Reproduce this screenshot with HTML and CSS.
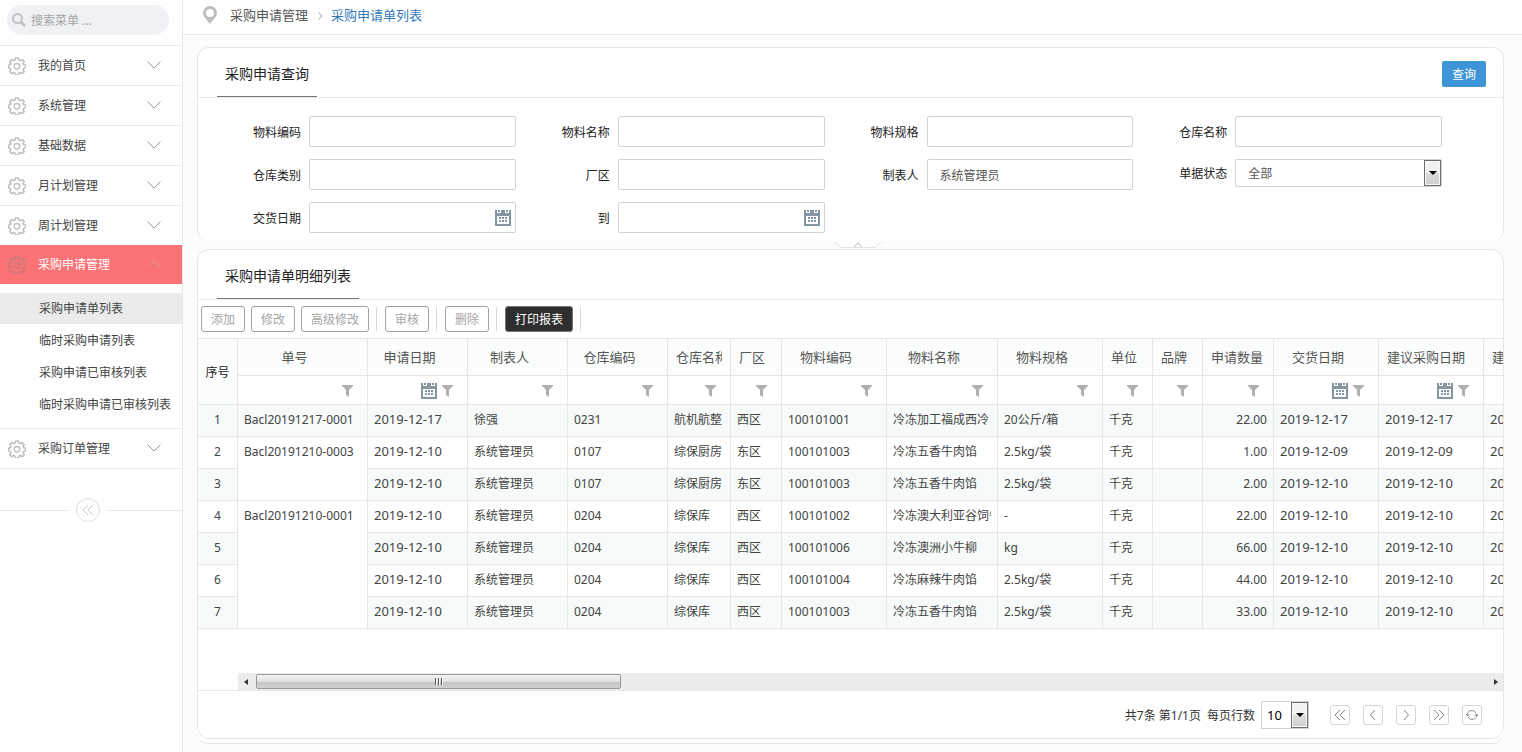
FILE: index.html
```html
<!DOCTYPE html>
<html lang="zh-CN">
<head>
    <meta charset="UTF-8">
    <meta name="viewport" content="width=device-width, initial-scale=1.0">
    <title>采购申请单列表</title>
    <link rel="stylesheet" href="styles.css">
</head>
<body>
    <svg class="sprite" aria-hidden="true">
        <symbol id="gear" viewBox="0 0 18 18">
            <path d="M7.6 1h2.8l.5 2 1.5.7 1.9-1.1 1.9 1.9-1.1 1.9.6 1.4 2 .5v2.5l-2 .6-.6 1.5 1.1 1.8-1.9 1.9-1.9-1.1-1.5.6-.5 2H7.6l-.6-2-1.4-.6-1.9 1.1-1.9-1.9 1.1-1.8-.7-1.5-1.6-.6V8.3l1.7-.5.6-1.4-1.1-1.9 1.9-1.9 1.9 1.1L7 3z" fill="none" stroke="currentColor" stroke-width="1.5" stroke-linejoin="round"/>
            <circle cx="9" cy="9.3" r="2.8" fill="none" stroke="currentColor" stroke-width="1.3"/>
        </symbol>
        <symbol id="down" viewBox="0 0 14 8">
            <path d="M.5.5 7 7 13.500.5" fill="none" stroke="currentColor"/>
        </symbol>
        <symbol id="up" viewBox="0 0 14 8">
            <path d="M.5 7.500 7 1l6.500 6.500" fill="none" stroke="currentColor"/>
        </symbol>
        <symbol id="calendar" viewBox="0 0 16 16">
            <path fill="currentColor" fill-rule="evenodd" d="M0 3h16v13H0zM2 6v8h12V6z"/>
            <path fill="currentColor" d="M0 0h2v3H0zM3 0h2v2H3zM6 0h4v3H6zM11 0h2v2h-2zM14 0h2v3h-2z"/>
            <path fill="currentColor" d="M4 7h2v2H4zM7 7h2v2H7zM10 7h2v2h-2zM4 10h2v2H4zM7 10h2v2H7zM10 10h2v2h-2z"/>
        </symbol>
        <symbol id="funnel" viewBox="0 0 11 12">
            <path fill="currentColor" d="M0 0h11v1L7 5v7L4 10V5L0 1z"/>
        </symbol>
        <symbol id="first" viewBox="0 0 12 12">
            <path d="M6 1 1 6l5 5M11 1 6 6l5 5" fill="none" stroke="currentColor"/>
        </symbol>
        <symbol id="prev" viewBox="0 0 12 12">
            <path d="M8 1 3.500 6 8 11" fill="none" stroke="currentColor"/>
        </symbol>
        <symbol id="next" viewBox="0 0 12 12">
            <path d="m4 1 4.500 5L4 11" fill="none" stroke="currentColor"/>
        </symbol>
        <symbol id="last" viewBox="0 0 12 12">
            <path d="m1 1 5 5-5 5M6 1l5 5-5 5" fill="none" stroke="currentColor"/>
        </symbol>
        <symbol id="refresh" viewBox="0 0 12 12">
            <path d="M1.500 6.500a4.500 4.500 0 0 1 8.500-2.500M10.500 5.500A4.500 4.500 0 0 1 2 8M0 5l1.500 2L3.500 5.500M8.500 6.500l2-1.500L12 7" fill="none" stroke="currentColor"/>
        </symbol>
    </svg>

    <div class="app">
        <aside class="sidebar">
            <div class="search">
                <svg class="search-icon" viewBox="0 0 14 14"><circle cx="5.500" cy="5.500" r="4.500" fill="none" stroke="currentColor" stroke-width="2"/><path d="m9 9 4 4" stroke="currentColor" stroke-width="2.500"/></svg>
                <input type="text" placeholder="搜索菜单 ..." aria-label="搜索菜单">
            </div>
            <nav class="menu">
                <a class="menu-item" href="#"><svg class="gear"><use href="#gear"/></svg><span>我的首页</span><svg class="arrow"><use href="#down"/></svg></a>
                <a class="menu-item" href="#"><svg class="gear"><use href="#gear"/></svg><span>系统管理</span><svg class="arrow"><use href="#down"/></svg></a>
                <a class="menu-item" href="#"><svg class="gear"><use href="#gear"/></svg><span>基础数据</span><svg class="arrow"><use href="#down"/></svg></a>
                <a class="menu-item" href="#"><svg class="gear"><use href="#gear"/></svg><span>月计划管理</span><svg class="arrow"><use href="#down"/></svg></a>
                <a class="menu-item" href="#"><svg class="gear"><use href="#gear"/></svg><span>周计划管理</span><svg class="arrow"><use href="#down"/></svg></a>
                <a class="menu-item active" href="#"><svg class="gear"><use href="#gear"/></svg><span>采购申请管理</span><svg class="arrow"><use href="#up"/></svg></a>
                <div class="submenu">
                    <a class="current" href="#">采购申请单列表</a>
                    <a href="#">临时采购申请列表</a>
                    <a href="#">采购申请已审核列表</a>
                    <a href="#">临时采购申请已审核列表</a>
                </div>
                <a class="menu-item" href="#"><svg class="gear"><use href="#gear"/></svg><span>采购订单管理</span><svg class="arrow"><use href="#down"/></svg></a>
            </nav>
            <div class="collapse">
                <button type="button" aria-label="收起菜单"><svg><use href="#first"/></svg></button>
            </div>
        </aside>

        <main class="main">
            <header class="breadcrumb">
                <svg class="pin" viewBox="0 0 14 18"><path fill="currentColor" fill-rule="evenodd" d="M7 0a7 7 0 0 1 7 7c0 3-2.500 5-7 11C2.500 12 0 10 0 7a7 7 0 0 1 7-7zm0 3a4 4 0 1 0 0 8 4 4 0 0 0 0-8z"/></svg>
                <span>采购申请管理</span>
                <svg class="sep" viewBox="0 0 5 8"><path d="m.5.5 3.500 3.500L.5 7.500" fill="none" stroke="currentColor"/></svg>
                <a href="#">采购申请单列表</a>
            </header>

            <section class="panel query-panel">
                <div class="panel-head">
                    <h2>采购申请查询</h2>
                    <button class="btn-query" type="submit" form="queryForm">查询</button>
                </div>
                <form class="query-form" id="queryForm">
                    <div class="field"><label for="code">物料编码</label><div class="control"><input type="text" id="code"></div></div>
                    <div class="field"><label for="name">物料名称</label><div class="control"><input type="text" id="name"></div></div>
                    <div class="field"><label for="spec">物料规格</label><div class="control"><input type="text" id="spec"></div></div>
                    <div class="field"><label for="store">仓库名称</label><div class="control"><input type="text" id="store"></div></div>
                    <div class="field"><label for="storeType">仓库类别</label><div class="control"><input type="text" id="storeType"></div></div>
                    <div class="field"><label for="area">厂区</label><div class="control"><input type="text" id="area"></div></div>
                    <div class="field"><label for="maker">制表人</label><div class="control"><input type="text" id="maker" value="系统管理员"></div></div>
                    <div class="field"><label for="status">单据状态</label><div class="control"><select id="status"><option>全部</option></select><i class="drop"></i></div></div>
                    <div class="field"><label for="dateFrom">交货日期</label><div class="control"><input type="text" id="dateFrom"><svg class="calendar"><use href="#calendar"/></svg></div></div>
                    <div class="field"><label for="dateTo">到</label><div class="control"><input type="text" id="dateTo"><svg class="calendar"><use href="#calendar"/></svg></div></div>
                </form>
                <button class="fold" type="button" aria-label="收起查询">
                    <svg viewBox="0 0 48 8"><path d="M0 0h48l-7 6.500H7z" fill="#fff"/><path d="m.5.500 6.500 6h34l6.500-6" fill="none" stroke="#e3e3e3"/><path d="m20 6 4-4 4 4" fill="none" stroke="#d5d5d5" stroke-width="1.500"/></svg>
                </button>
            </section>

            <div class="list-wrap">
            <section class="panel list-panel">
                <div class="panel-head">
                    <h2>采购申请单明细列表</h2>
                </div>
                <div class="toolbar">
                    <button type="button">添加</button>
                    <button type="button">修改</button>
                    <button type="button">高级修改</button>
                    <i></i>
                    <button type="button">审核</button>
                    <i></i>
                    <button type="button">删除</button>
                    <i></i>
                    <button class="dark" type="button">打印报表</button>
                    <i></i>
                </div>
                <div class="table-box">
                    <table>
                        <colgroup>
                            <col class="w40"><col class="w130"><col class="w100"><col class="w100"><col class="w100"><col class="w63"><col class="w51"><col class="w105"><col class="w111"><col class="w105"><col class="w50"><col class="w50"><col class="w71"><col class="w105"><col class="w105"><col class="w105">
                        </colgroup>
                        <thead>
                            <tr class="titles">
                                <th class="no" rowspan="2">序号</th>
                                <th><div>单号</div></th>
                                <th><div>申请日期</div></th>
                                <th><div>制表人</div></th>
                                <th><div>仓库编码</div></th>
                                <th><div>仓库名称</div></th>
                                <th><div>厂区</div></th>
                                <th><div>物料编码</div></th>
                                <th><div>物料名称</div></th>
                                <th><div>物料规格</div></th>
                                <th><div>单位</div></th>
                                <th><div>品牌</div></th>
                                <th><div>申请数量</div></th>
                                <th><div>交货日期</div></th>
                                <th><div>建议采购日期</div></th>
                                <th><div>建议到货日期</div></th>
                            </tr>
                            <tr class="filters">
                                <td><svg class="funnel"><use href="#funnel"/></svg></td>
                                <td><svg class="calendar"><use href="#calendar"/></svg><svg class="funnel"><use href="#funnel"/></svg></td>
                                <td><svg class="funnel"><use href="#funnel"/></svg></td>
                                <td><svg class="funnel"><use href="#funnel"/></svg></td>
                                <td><svg class="funnel"><use href="#funnel"/></svg></td>
                                <td><svg class="funnel"><use href="#funnel"/></svg></td>
                                <td><svg class="funnel"><use href="#funnel"/></svg></td>
                                <td><svg class="funnel"><use href="#funnel"/></svg></td>
                                <td><svg class="funnel"><use href="#funnel"/></svg></td>
                                <td><svg class="funnel"><use href="#funnel"/></svg></td>
                                <td><svg class="funnel"><use href="#funnel"/></svg></td>
                                <td><svg class="funnel"><use href="#funnel"/></svg></td>
                                <td><svg class="calendar"><use href="#calendar"/></svg><svg class="funnel"><use href="#funnel"/></svg></td>
                                <td><svg class="calendar"><use href="#calendar"/></svg><svg class="funnel"><use href="#funnel"/></svg></td>
                                <td><svg class="calendar"><use href="#calendar"/></svg><svg class="funnel"><use href="#funnel"/></svg></td>
                            </tr>
                        </thead>
                        <tbody>
                            <tr><td class="no">1</td><td>Bacl20191217-0001</td><td class="date">2019-12-17</td><td>徐强</td><td>0231</td><td>航机航整</td><td>西区</td><td>100101001</td><td>冷冻加工福成西冷</td><td>20公斤/箱</td><td>千克</td><td></td><td class="num">22.00</td><td class="date">2019-12-17</td><td class="date">2019-12-17</td><td class="date">2019-12-17</td></tr>
                            <tr><td class="no">2</td><td class="bill" rowspan="2">Bacl20191210-0003</td><td class="date">2019-12-10</td><td>系统管理员</td><td>0107</td><td>综保厨房</td><td>东区</td><td>100101003</td><td>冷冻五香牛肉馅</td><td>2.5kg/袋</td><td>千克</td><td></td><td class="num">1.00</td><td class="date">2019-12-09</td><td class="date">2019-12-09</td><td class="date">2019-12-09</td></tr>
                            <tr><td class="no">3</td><td class="date">2019-12-10</td><td>系统管理员</td><td>0107</td><td>综保厨房</td><td>东区</td><td>100101003</td><td>冷冻五香牛肉馅</td><td>2.5kg/袋</td><td>千克</td><td></td><td class="num">2.00</td><td class="date">2019-12-10</td><td class="date">2019-12-10</td><td class="date">2019-12-10</td></tr>
                            <tr><td class="no">4</td><td class="bill" rowspan="4">Bacl20191210-0001</td><td class="date">2019-12-10</td><td>系统管理员</td><td>0204</td><td>综保库</td><td>西区</td><td>100101002</td><td><div class="clip">冷冻澳大利亚谷饲牛</div></td><td>-</td><td>千克</td><td></td><td class="num">22.00</td><td class="date">2019-12-10</td><td class="date">2019-12-10</td><td class="date">2019-12-10</td></tr>
                            <tr><td class="no">5</td><td class="date">2019-12-10</td><td>系统管理员</td><td>0204</td><td>综保库</td><td>西区</td><td>100101006</td><td>冷冻澳洲小牛柳</td><td>kg</td><td>千克</td><td></td><td class="num">66.00</td><td class="date">2019-12-10</td><td class="date">2019-12-10</td><td class="date">2019-12-10</td></tr>
                            <tr><td class="no">6</td><td class="date">2019-12-10</td><td>系统管理员</td><td>0204</td><td>综保库</td><td>西区</td><td>100101004</td><td>冷冻麻辣牛肉馅</td><td>2.5kg/袋</td><td>千克</td><td></td><td class="num">44.00</td><td class="date">2019-12-10</td><td class="date">2019-12-10</td><td class="date">2019-12-10</td></tr>
                            <tr><td class="no">7</td><td class="date">2019-12-10</td><td>系统管理员</td><td>0204</td><td>综保库</td><td>西区</td><td>100101003</td><td>冷冻五香牛肉馅</td><td>2.5kg/袋</td><td>千克</td><td></td><td class="num">33.00</td><td class="date">2019-12-10</td><td class="date">2019-12-10</td><td class="date">2019-12-10</td></tr>
                        </tbody>
                    </table>
                </div>
                <div class="scrollbar">
                    <i class="left"></i>
                    <div class="thumb"><i></i><i></i><i></i></div>
                    <i class="right"></i>
                </div>
                <footer class="pager">
                    <span>共7条 第1/1页</span>
                    <label for="pageSize">每页行数</label>
                    <div class="control page-size"><select id="pageSize"><option>10</option></select><i class="drop"></i></div>
                    <div class="pages">
                        <button type="button" aria-label="首页"><svg><use href="#first"/></svg></button>
                        <button type="button" aria-label="上一页"><svg><use href="#prev"/></svg></button>
                        <button type="button" aria-label="下一页"><svg><use href="#next"/></svg></button>
                        <button type="button" aria-label="末页"><svg><use href="#last"/></svg></button>
                        <button type="button" aria-label="刷新"><svg><use href="#refresh"/></svg></button>
                    </div>
                </footer>
            </section>
            </div>
        </main>
    </div>
</body>
</html>
```
FILE: styles.css
```css
* {
    box-sizing: border-box;
}
body {
    margin: 0;
    font-family: "Noto Sans", "Noto Sans CJK SC", sans-serif;
    font-size: 12px;
    line-height: 20px;
    color: #444;
    background-color: #fcfcfc;
}
a {
    color: inherit;
    text-decoration: none;
}
button, input, select {
    font: inherit;
    margin: 0;
}
button {
    padding: 0;
    cursor: pointer;
}
svg {
    display: block;
    flex: none;
}
.sprite {
    position: absolute;
    width: 0;
    height: 0;
}
.app {
    display: flex;
    min-height: 100vh;
}

/* sidebar */
.sidebar {
    flex: none;
    width: 183px;
    background-color: #fefefe;
    border-right: 1px solid #e8e8e8;
}
.search {
    display: flex;
    align-items: center;
    gap: 5px;
    height: 30px;
    margin: 5px 13px 10px 7px;
    padding: 0 5px;
    border-radius: 15px;
    background-color: #f0f1f4;
    color: #c0c0c0;
}
.search-icon {
    width: 14px;
    height: 14px;
}
.search input {
    flex: 1;
    min-width: 0;
    padding: 2px 0 0;
    border: none;
    outline: none;
    background: none;
}
.search input::placeholder {
    color: #a5a5a5;
}
.menu {
    border-top: 1px solid #ebebeb;
}
.menu-item {
    display: flex;
    align-items: center;
    height: 40px;
    padding: 0 21px 0 8px;
    border-bottom: 1px solid #ebebeb;
}
.menu-item span {
    flex: 1;
    padding-left: 12px;
}
.menu-item:has(+ .active) {
    height: 39px;
    border-bottom: none;
}
.menu-item.active {
    height: 39px;
    border-bottom: none;
    background-color: #fc7376;
    color: #fff;
}
.gear {
    width: 18px;
    height: 18px;
    color: #bebebe;
}
.active .gear {
    color: #c97a7c;
}
.arrow {
    width: 14px;
    height: 8px;
    margin-bottom: 2px;
    color: #999;
}
.active .arrow {
    color: #cf9b9b;
}
.submenu {
    padding: 9px 0 7px;
    border-bottom: 1px solid #ebebeb;
}
.submenu a {
    display: block;
    height: 31px;
    margin-bottom: 1px;
    padding-left: 39px;
    line-height: 31px;
}
.submenu .current {
    background-color: #ebebeb;
}
.collapse {
    display: flex;
    align-items: center;
    gap: 8px;
    margin-top: 29px;
}
.collapse::before, .collapse::after {
    content: "";
    height: 1px;
    background-color: #e8e8e8;
}
.collapse::before {
    width: 68px;
}
.collapse::after {
    flex: 1;
}
.collapse button {
    display: flex;
    align-items: center;
    justify-content: center;
    width: 24px;
    height: 24px;
    border: 1px solid #e0e0e0;
    border-radius: 50%;
    background: none;
    color: #ccc;
}
.collapse svg {
    width: 12px;
    height: 12px;
}

/* main area */
.main {
    flex: 1;
    min-width: 0;
    display: flex;
    flex-direction: column;
}
.breadcrumb {
    display: flex;
    align-items: center;
    height: 35px;
    padding: 0 20px 4px;
    border-bottom: 1px solid #ebebeb;
    background-color: #fff;
    font-size: 13px;
    color: #555;
}
.breadcrumb a {
    color: #337ab7;
}
.pin {
    width: 14px;
    height: 18px;
    margin-right: 13px;
    color: #bdbdbd;
}
.sep {
    width: 5px;
    height: 8px;
    margin: 2px 8px 0 10px;
    color: #999;
}
.panel {
    border: 1px solid #e6e6e6;
    border-radius: 12px;
    background-color: #fff;
}
.panel-head {
    display: flex;
    align-items: flex-end;
    justify-content: space-between;
    height: 50px;
    padding: 0 17px 0 19px;
    border-bottom: 1px solid #ebebeb;
}
.panel-head h2 {
    height: 36px;
    margin: 0;
    padding: 0 8px;
    border-bottom: 1px solid #777;
    font-size: 14px;
    font-weight: normal;
    line-height: 26px;
    color: #222;
}
.btn-query {
    width: 44px;
    height: 26px;
    margin-bottom: 10px;
    padding-top: 2px;
    border: none;
    border-radius: 2px;
    background-color: #3d94d6;
    color: #fff;
}

/* query form */
.query-panel {
    position: relative;
    margin: 12px 18px 0 14px;
    border-bottom: none;
}
.query-form {
    display: grid;
    grid-template-columns: repeat(4, 1fr);
    grid-auto-rows: 31px;
    row-gap: 12px;
    align-items: start;
    padding: 18px 61px 8px 9px;
    color: #222;
}
.field {
    display: flex;
    align-items: center;
    gap: 8px;
}
.field label {
    flex: none;
    width: 94px;
    padding-top: 2px;
    text-align: right;
}
.control {
    position: relative;
    flex: 1;
    min-width: 0;
}
.control input, .control select {
    display: block;
    width: 100%;
    height: 31px;
    padding: 0 12px;
    border: 1px solid #ced2db;
    border-radius: 2px;
    outline: none;
    background-color: #fff;
    color: #555;
}
.control select {
    height: 28px;
    padding-top: 2px;
    appearance: none;
}
.calendar {
    width: 16px;
    height: 16px;
    color: #8496a2;
}
.control .calendar {
    position: absolute;
    top: 8px;
    right: 5px;
}
.drop {
    position: absolute;
    top: 1px;
    right: 1px;
    bottom: 1px;
    width: 17px;
    border: 1px solid #6e6e6e;
    box-shadow: inset 0 0 0 1px #f8f8f8;
    background: linear-gradient(#f2f2f2 50%, #dcdcdc 50%, #cfcfcf);
    pointer-events: none;
}
.drop::after {
    content: "";
    position: absolute;
    top: 10px;
    left: 4px;
    border: 4px solid transparent;
    border-top-color: #000;
    border-bottom: none;
}
.fold {
    position: absolute;
    top: 100%;
    left: 50%;
    width: 48px;
    height: 8px;
    margin-left: -17px;
    border: none;
    background: none;
}

/* list */
.list-wrap {
    flex: 1;
    display: flex;
    flex-direction: column;
    margin: 8px 18px 8px 14px;
    padding-bottom: 4px;
    border-bottom: 1px solid #e6e6e6;
    border-radius: 12px;
    background-color: #fff;
}
.list-panel {
    flex: 1;
    display: flex;
    flex-direction: column;
}
.list-panel .panel-head {
    flex: none;
}
.toolbar {
    display: flex;
    align-items: center;
    gap: 6px;
    height: 38px;
    padding: 0 3px;
}
.toolbar button {
    height: 26px;
    padding: 2px 9px 0;
    border: 1px solid #a0a0a0;
    border-radius: 3px;
    background-color: #fff;
    color: #a5a5a5;
}
.toolbar .dark {
    border-color: #777;
    background-color: #2e2e2e;
    color: #fff;
}
.toolbar i {
    width: 1px;
    height: 24px;
    margin: 0 2px 0 1px;
    background-color: #d5dfd2;
}
.table-box {
    flex: 1;
    overflow: hidden;
    border-top: 1px solid #e6e6e6;
}
table {
    width: 1391px;
    table-layout: fixed;
    border-collapse: separate;
    border-spacing: 0;
}
.w40 { width: 40px; }
.w50 { width: 50px; }
.w51 { width: 51px; }
.w63 { width: 63px; }
.w71 { width: 71px; }
.w100 { width: 100px; }
.w105 { width: 105px; }
.w111 { width: 111px; }
.w130 { width: 130px; }
th, td {
    padding: 0 6px 2px;
    border-right: 1px solid #e6e6e6;
    border-bottom: 1px solid #e6e6e6;
    white-space: nowrap;
}
th {
    font-weight: normal;
}
.titles {
    height: 37px;
    background-color: #fbfdfc;
}
.titles th {
    padding: 0 8px;
    font-size: 13px;
    color: #555;
}
.titles .no {
    padding: 2px 0 0;
    font-size: 12px;
    color: #222;
}
.titles div {
    overflow: hidden;
}
.titles div::after {
    content: "";
    display: inline-block;
    width: 16px;
}
.filters {
    height: 29px;
}
.filters td {
    padding: 0 14px 0 0;
    text-align: right;
}
.filters svg {
    display: inline-block;
    vertical-align: middle;
}
.funnel {
    width: 11px;
    height: 12px;
    margin-left: 5px;
    color: #b0b0b0;
}
tbody tr {
    height: 32px;
}
tbody tr:nth-child(odd) {
    background-color: #f6faf9;
}
.no {
    padding: 0 0 2px;
    text-align: center;
}
.bill {
    padding-top: 5px;
    vertical-align: top;
    background-color: #fff;
}
.date {
    padding-bottom: 4px;
    font-size: 13px;
}
.num {
    text-align: right;
}
.clip {
    overflow: hidden;
}
.scrollbar {
    display: flex;
    align-items: center;
    height: 17px;
    margin-left: 40px;
    background-color: #ececec;
}
.scrollbar .left, .scrollbar .right {
    width: 18px;
    height: 6px;
}
.scrollbar .left::after, .scrollbar .right::after {
    content: "";
    display: block;
    width: 0;
    margin: 0 6px;
    border: 3px solid transparent;
}
.scrollbar .left::after {
    border-left: none;
    border-right: 4px solid #333;
}
.scrollbar .right::after {
    margin-left: 9px;
    border-right: none;
    border-left: 4px solid #333;
}
.scrollbar .right {
    margin-left: auto;
}
.thumb {
    display: flex;
    align-items: center;
    justify-content: center;
    gap: 1px;
    width: 365px;
    height: 15px;
    border: 1px solid #999;
    border-radius: 2px;
    background: linear-gradient(#f5f5f5, #e0e0e0 50%, #c4c5c8 55%, #d0d0d2);
}
.thumb i {
    width: 2px;
    height: 7px;
    border-left: 1px solid #555;
    background-color: #fff;
}

/* pager */
.pager {
    display: flex;
    align-items: center;
    justify-content: flex-end;
    gap: 6px;
    height: 48px;
    padding-right: 21px;
    border-top: 1px solid #e6e6e6;
    color: #333;
}
.pager span, .pager label {
    padding-top: 2px;
}
.page-size {
    flex: none;
    width: 48px;
}
.page-size select {
    padding: 0 5px;
    border-radius: 0;
    font-size: 13px;
    color: #000;
}
.pages {
    display: flex;
    gap: 13px;
    margin-left: 15px;
}
.pages button {
    display: flex;
    align-items: center;
    justify-content: center;
    width: 20px;
    height: 20px;
    border: 1px solid #d0d6dc;
    border-radius: 3px;
    background-color: #fff;
    color: #888;
}
.pages svg {
    width: 12px;
    height: 12px;
}
```
